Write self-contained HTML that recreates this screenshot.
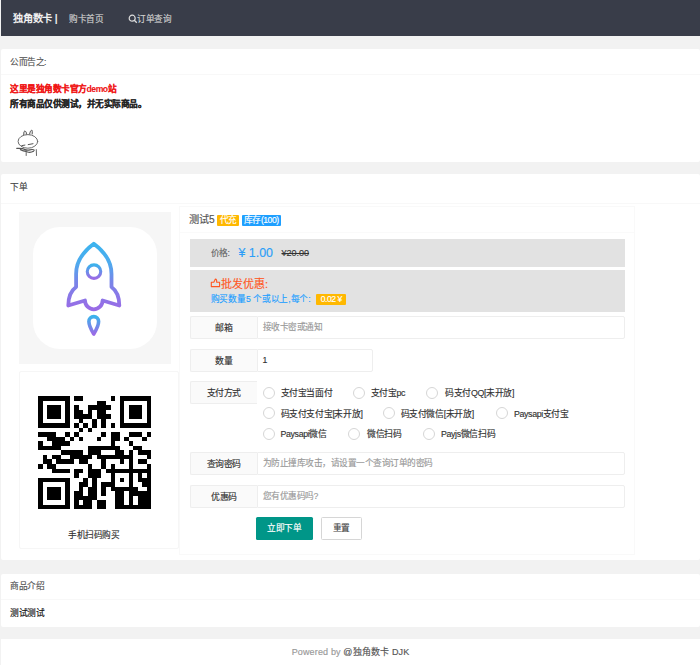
<!DOCTYPE html>
<html lang="zh-CN"><head><meta charset="utf-8">
<style>
*{margin:0;padding:0;box-sizing:border-box}
html,body{width:700px;height:665px;overflow:hidden}
body{background:#f2f2f2;font-family:"Liberation Sans",sans-serif;font-size:8.7px;letter-spacing:-0.5px;color:#333;position:relative;-webkit-text-stroke-width:0.15px}
.a{position:absolute;white-space:nowrap}
.hdr{left:1px;top:0;width:699px;height:36px;background:#393d49}
.card{background:#fff;left:1px;width:699px;border-radius:2px}
.line{height:1px;background:#f8f8f8}
.lbl{background:#fafafa;border:1px solid #eee;border-right:none;border-radius:2px 0 0 2px;text-align:center;color:#333;font-size:8.9px;text-indent:0.5px}
.inp{background:#fff;border:1px solid #eee;border-radius:0 2px 2px 0;color:#999;font-size:8.7px;padding-left:5px}
.rad{width:12px;height:12px;border:1.3px solid #d6d6d6;border-radius:50%;background:#fff}
.rt{font-size:8.8px;letter-spacing:-0.35px;color:#333}
.badge{color:#fff;font-size:8.6px;letter-spacing:-0.5px;text-indent:0.5px;text-align:center;border-radius:1px}
</style></head><body>
<div class="a hdr"></div>
<div class="a" style="left:13px;top:12px;font-size:10.2px;font-weight:bold;color:#f0f0f0;line-height:14px;letter-spacing:-0.2px;-webkit-text-stroke-width:0">独角数卡 |</div>
<div class="a" style="left:69px;top:13px;font-size:8.6px;color:#cfcfcf;line-height:12px">购卡首页</div>
<svg class="a" style="left:128px;top:14px" width="10" height="10" viewBox="0 0 10 10"><circle cx="4.2" cy="4.2" r="3" fill="none" stroke="#ddd" stroke-width="1.2"/><path d="M6.3 6.3L8.8 8.8" stroke="#ddd" stroke-width="1.3"/></svg>
<div class="a" style="left:137px;top:13px;font-size:8.6px;color:#cfcfcf;line-height:12px">订单查询</div>

<!-- card 1 -->
<div class="a card" style="top:48.5px;height:113px"></div>
<div class="a line" style="left:1px;top:74px;width:699px"></div>
<div class="a" style="left:10px;top:56px;line-height:12px;color:#555">公而告之:</div>
<div class="a" style="left:10px;top:83px;line-height:12px;color:#f01414;font-weight:bold;font-size:8.7px;-webkit-text-stroke-width:0.08px">这里是独角数卡官方demo站</div>
<div class="a" style="left:10px;top:98px;line-height:12px;color:#222;font-weight:bold;font-size:8.7px;-webkit-text-stroke-width:0.08px">所有商品仅供测试，并无实际商品。</div>
<svg class="a" style="left:12px;top:125px" width="30" height="35" viewBox="0 0 30 35" fill="none" stroke="#555" stroke-width="1" stroke-linecap="round">
<path d="M11.6 9.8 Q11.6 5.6 13 5.8 Q14.5 6.4 14.8 9.4" fill="#e4e4e4" stroke="#666"/><path d="M17.4 9.2 Q18.4 4.8 19.9 5 Q20.7 6.4 20.3 9" fill="#e4e4e4" stroke="#666"/>
<ellipse cx="15.9" cy="16.4" rx="9.8" ry="6.8" stroke="#6a6a6a"/>
<path d="M9.8 20.6 L12.9 20.1 M16.2 19.6 L21 18.7"/>
<path d="M4.8 23.4 Q8 23.2 10.5 23.6 Q14 25.8 18 24.8 Q21 24 22.3 25.2" stroke-width="1.2"/>
<path d="M8.5 24.6 Q12 26.5 14.5 26.2 M15.5 27 Q18.5 28 21.5 26.3" stroke-width="1.3"/>
<path d="M14.2 26 L14.2 30.5 M24.3 24.6 L24.5 30.5" stroke-width="0.9"/>
</svg>

<!-- card 2 -->
<div class="a card" style="top:174px;height:386px"></div>
<div class="a line" style="left:1px;top:203px;width:699px"></div>
<div class="a" style="left:10px;top:181px;line-height:12px;color:#444">下单</div>
<!-- faint borders -->
<div class="a" style="left:179px;top:206px;width:456px;height:349px;border:1px solid #f9f9f9"></div>
<div class="a" style="left:180px;top:232px;width:454px;height:1px;background:#fafafa"></div>
<div class="a" style="left:19px;top:371px;width:160px;height:178px;border:1px solid #f6f6f6;border-radius:2px"></div>
<!-- product image -->
<div class="a" style="left:19px;top:212px;width:152px;height:152px;background:#f6f6f6"></div>
<div class="a" style="left:33px;top:227px;width:124px;height:122px;background:#fff;border-radius:27px"></div>
<svg class="a" style="left:60px;top:236px" width="70" height="105" viewBox="60 236 70 105">
<defs><linearGradient id="g" x1="0" y1="0" x2="0" y2="1"><stop offset="0" stop-color="#3cb4ef"/><stop offset="0.3" stop-color="#4eaaee"/><stop offset="0.58" stop-color="#7885e8"/><stop offset="1" stop-color="#9a6be6"/></linearGradient>
<linearGradient id="g2" x1="0" y1="0" x2="0" y2="1"><stop offset="0" stop-color="#3cb2ec"/><stop offset="1" stop-color="#9a6be6"/></linearGradient></defs>
<path d="M93.8 243.7 C84 251 76.1 261 76.1 274 L76.1 287 C70.5 291 68.3 298 68.3 305.5 L85 300.5 A8.8 8.8 0 0 0 102.6 300.5 L119.3 305.5 C119.3 298 117.1 291 111.5 287 L111.5 274 C111.5 261 103.6 251 93.8 243.7 Z" fill="none" stroke="url(#g)" stroke-width="3.8" stroke-linejoin="round"/>
<circle cx="94" cy="271.6" r="6.75" fill="none" stroke="url(#g2)" stroke-width="3.1"/>
<path d="M93.75 334 C91 329.5 88.9 325.5 88.9 321.5 A4.85 4.85 0 0 1 98.6 321.5 C98.6 325.5 96.5 329.5 93.75 334 Z" fill="none" stroke="url(#g2)" stroke-width="3.6" stroke-linejoin="round"/>
</svg>
<!-- QR -->
<svg class="a" style="left:38.2px;top:395.5px" width="113.3" height="113.3" viewBox="0 0 25 25" shape-rendering="crispEdges"><path d="M0 0h7v1h-7zM8 0h2v1h-2zM16 0h1v1h-1zM18 0h7v1h-7zM0 1h1v1h-1zM6 1h1v1h-1zM13 1h2v1h-2zM18 1h1v1h-1zM24 1h1v1h-1zM0 2h1v1h-1zM2 2h3v1h-3zM6 2h1v1h-1zM8 2h1v1h-1zM11 2h5v1h-5zM18 2h1v1h-1zM20 2h3v1h-3zM24 2h1v1h-1zM0 3h1v1h-1zM2 3h3v1h-3zM6 3h1v1h-1zM8 3h2v1h-2zM11 3h1v1h-1zM13 3h2v1h-2zM18 3h1v1h-1zM20 3h3v1h-3zM24 3h1v1h-1zM0 4h1v1h-1zM2 4h3v1h-3zM6 4h1v1h-1zM8 4h4v1h-4zM13 4h3v1h-3zM18 4h1v1h-1zM20 4h3v1h-3zM24 4h1v1h-1zM0 5h1v1h-1zM6 5h1v1h-1zM9 5h1v1h-1zM12 5h1v1h-1zM14 5h1v1h-1zM18 5h1v1h-1zM24 5h1v1h-1zM0 6h7v1h-7zM8 6h1v1h-1zM10 6h1v1h-1zM12 6h1v1h-1zM14 6h1v1h-1zM16 6h1v1h-1zM18 6h7v1h-7zM9 7h1v1h-1zM11 7h1v1h-1zM0 8h4v1h-4zM6 8h1v1h-1zM8 8h1v1h-1zM14 8h1v1h-1zM16 8h2v1h-2zM20 8h3v1h-3zM24 8h1v1h-1zM2 9h4v1h-4zM7 9h1v1h-1zM9 9h1v1h-1zM13 9h1v1h-1zM16 9h2v1h-2zM19 9h1v1h-1zM23 9h1v1h-1zM0 10h1v1h-1zM3 10h4v1h-4zM16 10h1v1h-1zM20 10h1v1h-1zM0 11h5v1h-5zM11 11h7v1h-7zM21 11h2v1h-2zM5 12h5v1h-5zM11 12h3v1h-3zM17 12h2v1h-2zM20 12h1v1h-1zM22 12h3v1h-3zM1 13h1v1h-1zM3 13h2v1h-2zM7 13h5v1h-5zM13 13h8v1h-8zM24 13h1v1h-1zM1 14h2v1h-2zM4 14h4v1h-4zM9 14h2v1h-2zM14 14h1v1h-1zM18 14h1v1h-1zM20 14h1v1h-1zM22 14h2v1h-2zM0 15h1v1h-1zM2 15h2v1h-2zM11 15h1v1h-1zM14 15h1v1h-1zM16 15h1v1h-1zM20 15h1v1h-1zM24 15h1v1h-1zM3 16h4v1h-4zM8 16h2v1h-2zM11 16h3v1h-3zM15 16h10v1h-10zM8 17h1v1h-1zM11 17h3v1h-3zM16 17h1v1h-1zM20 17h1v1h-1zM22 17h1v1h-1zM24 17h1v1h-1zM0 18h7v1h-7zM10 18h1v1h-1zM12 18h1v1h-1zM16 18h1v1h-1zM18 18h1v1h-1zM20 18h1v1h-1zM22 18h3v1h-3zM0 19h1v1h-1zM6 19h1v1h-1zM9 19h2v1h-2zM12 19h1v1h-1zM14 19h3v1h-3zM20 19h1v1h-1zM23 19h2v1h-2zM0 20h1v1h-1zM2 20h3v1h-3zM6 20h1v1h-1zM9 20h1v1h-1zM11 20h2v1h-2zM14 20h1v1h-1zM16 20h6v1h-6zM24 20h1v1h-1zM0 21h1v1h-1zM2 21h3v1h-3zM6 21h1v1h-1zM8 21h2v1h-2zM11 21h2v1h-2zM14 21h1v1h-1zM17 21h2v1h-2zM20 21h5v1h-5zM0 22h1v1h-1zM2 22h3v1h-3zM6 22h1v1h-1zM8 22h5v1h-5zM17 22h2v1h-2zM20 22h1v1h-1zM22 22h3v1h-3zM0 23h1v1h-1zM6 23h1v1h-1zM8 23h1v1h-1zM10 23h2v1h-2zM13 23h2v1h-2zM17 23h2v1h-2zM20 23h1v1h-1zM22 23h3v1h-3zM0 24h7v1h-7zM8 24h4v1h-4zM13 24h2v1h-2zM17 24h8v1h-8z" fill="#000"/></svg>
<div class="a" style="left:68px;top:529px;line-height:12px;color:#333">手机扫码购买</div>

<!-- right column -->
<div class="a" style="left:189px;top:213px;font-size:10.2px;line-height:13px;color:#555;letter-spacing:0">测试5</div>
<div class="a badge" style="left:217px;top:215px;width:22px;height:11px;line-height:11px;background:#ffb800">代充</div>
<div class="a badge" style="left:241.5px;top:215px;width:39px;height:11px;line-height:11px;background:#1e9fff">库存(100)</div>

<div class="a" style="left:189.5px;top:239px;width:435.5px;height:28px;background:#e2e2e2"></div>
<div class="a" style="left:210.5px;top:247px;line-height:12px;color:#666">价格:</div>
<div class="a" style="left:238.5px;top:244.5px;font-size:12.4px;line-height:16px;color:#2b9ef8;letter-spacing:0">¥ 1.00</div>
<div class="a" style="left:281.5px;top:246.5px;line-height:12px;font-size:9px;letter-spacing:0;color:#333;text-decoration:line-through">¥20.00</div>

<div class="a" style="left:189.5px;top:270px;width:435.5px;height:42px;background:#e2e2e2"></div>
<svg class="a" style="left:206px;top:272px" width="16" height="20" viewBox="206 272 16 20" fill="none" stroke="#ff5722" stroke-width="1.1" stroke-linejoin="round"><path d="M211.3 286.6 L211.3 282.3 L213.8 282.3 L215.4 279 Q216.9 279.2 216.7 282.3 L219.6 282.3 L219.6 286.6 Z"/></svg>
<div class="a" style="left:221px;top:277px;font-size:11px;line-height:14px;color:#ff5722;letter-spacing:0">批发优惠:</div>
<div class="a" style="left:210.5px;top:293px;line-height:12px;color:#1e9fff;letter-spacing:-0.15px">购买数量5 个或以上,每个:</div>
<div class="a badge" style="left:316px;top:294px;width:30px;height:11px;line-height:11px;background:#ffb800">0.02 ¥</div>

<!-- form rows -->
<div class="a lbl" style="left:189.5px;top:315.5px;width:67px;height:23px;line-height:22px">邮箱</div>
<div class="a inp" style="left:256.5px;top:315.5px;width:368.5px;height:23px;line-height:21px">接收卡密或通知</div>
<div class="a lbl" style="left:189.5px;top:348.5px;width:67px;height:23px;line-height:22px">数量</div>
<div class="a inp" style="left:256.5px;top:348.5px;width:116px;height:23px;line-height:21px;color:#333">1</div>
<div class="a lbl" style="left:189.5px;top:380.5px;width:67px;height:23px;line-height:22px">支付方式</div>

<div class="a rad" style="left:262.5px;top:386.5px"></div><div class="a rt" style="left:280.5px;top:387px;line-height:12px">支付宝当面付</div>
<div class="a rad" style="left:352.5px;top:386.5px"></div><div class="a rt" style="left:370.5px;top:387px;line-height:12px">支付宝pc</div>
<div class="a rad" style="left:426px;top:386.5px"></div><div class="a rt" style="left:445px;top:387px;line-height:12px">码支付QQ[未开放]</div>
<div class="a rad" style="left:262.5px;top:407px"></div><div class="a rt" style="left:280.5px;top:407.5px;line-height:12px">码支付支付宝[未开放]</div>
<div class="a rad" style="left:382.5px;top:407px"></div><div class="a rt" style="left:400.5px;top:407.5px;line-height:12px">码支付微信[未开放]</div>
<div class="a rad" style="left:495.5px;top:407px"></div><div class="a rt" style="left:514px;top:407.5px;line-height:12px">Paysapi支付宝</div>
<div class="a rad" style="left:262.5px;top:427.5px"></div><div class="a rt" style="left:280.5px;top:428px;line-height:12px">Paysapi微信</div>
<div class="a rad" style="left:348px;top:427.5px"></div><div class="a rt" style="left:367px;top:428px;line-height:12px">微信扫码</div>
<div class="a rad" style="left:422.5px;top:427.5px"></div><div class="a rt" style="left:441px;top:428px;line-height:12px">Payjs微信扫码</div>

<div class="a lbl" style="left:189.5px;top:452px;width:67px;height:23px;line-height:22px">查询密码</div>
<div class="a inp" style="left:256.5px;top:452px;width:368.5px;height:23px;line-height:21px">为防止撞库攻击，请设置一个查询订单的密码</div>
<div class="a lbl" style="left:189.5px;top:484.5px;width:67px;height:23px;line-height:22px">优惠码</div>
<div class="a inp" style="left:256.5px;top:484.5px;width:368.5px;height:23px;line-height:21px">您有优惠码吗?</div>

<div class="a" style="left:256px;top:517px;width:56.5px;height:23px;line-height:23px;background:#009688;color:#fff;text-align:center;border-radius:1.5px">立即下单</div>
<div class="a" style="left:321px;top:517px;width:40.5px;height:23px;line-height:21px;background:#fff;border:1px solid #d6d6d6;color:#444;text-align:center;border-radius:1.5px">重置</div>

<!-- card 3 -->
<div class="a card" style="top:573.5px;height:53px"></div>
<div class="a line" style="left:1px;top:599px;width:699px"></div>
<div class="a" style="left:10px;top:580px;line-height:12px;color:#555">商品介绍</div>
<div class="a" style="left:10px;top:607px;line-height:12px;color:#111">测试测试</div>

<!-- footer -->
<div class="a" style="left:1px;top:638.5px;width:699px;height:27px;background:#fff"></div>
<div class="a" style="left:1px;top:646px;width:699px;text-align:center;line-height:12px;color:#999;font-size:9px;letter-spacing:0.15px">Powered by <span style="color:#555">@独角数卡 DJK</span></div>
</body></html>
